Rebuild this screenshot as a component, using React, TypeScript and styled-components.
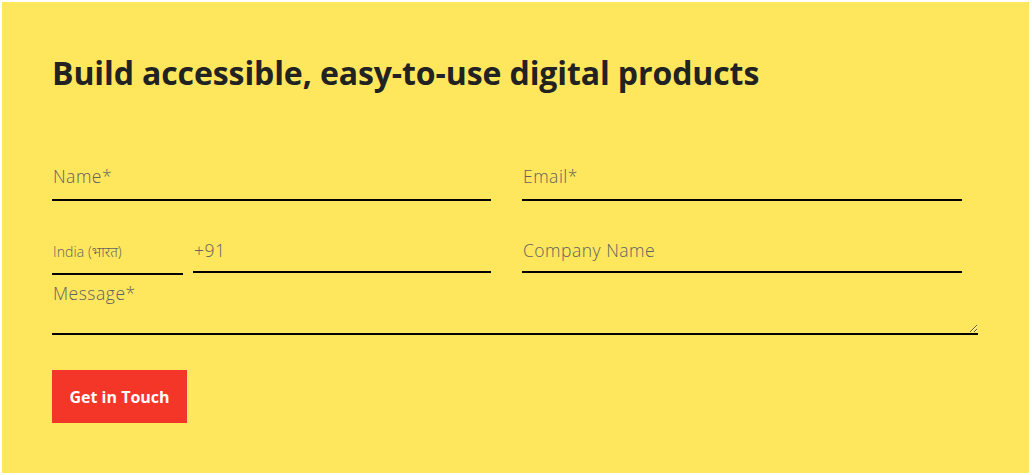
import React from "react";
import styled, { createGlobalStyle } from "styled-components";

const Global = createGlobalStyle`
  html, body { margin: 0; padding: 0; background: #ffffff; }
  body { padding: 2px 3px 2px 2px; font-family: "Open Sans", "Noto Sans", sans-serif; }
  * { box-sizing: border-box; }
`;

const Section = styled.section`
  width: 1027px;
  height: 471px;
  background: #fee75c;
  padding: 50px 50px 0 50px;
`;

const Heading = styled.h2`
  margin: 0;
  font-family: "Open Sans", sans-serif;
  font-weight: 700;
  font-size: 32px;
  line-height: 42px;
  letter-spacing: -0.1px;
  color: #222222;
`;

const Form = styled.form`
  margin-top: 61px;
  display: flex;
  flex-direction: column;
`;

const Row = styled.div<{ $gap?: number }>`
  display: grid;
  grid-template-columns: 439px 440px;
  column-gap: 31px;
  margin-top: ${(p) => p.$gap ?? 0}px;
`;

const Field = styled.input<{ $shift?: number }>`
  width: 100%;
  height: 46px;
  border: none;
  border-bottom: 2px solid #000;
  background: transparent;
  padding: ${(p) => (p.$shift ?? 0) > 0 ? `${p.$shift}px 0 0 1px` : "0 0 3px 1px"};
  font-family: "Open Sans", sans-serif;
  font-size: 17.5px;
  font-weight: 300;
  letter-spacing: 0.5px;
  color: #333;
  outline: none;
  &::placeholder { color: #626262; opacity: 1; }
`;

const Phone = styled.div`
  display: flex;
  gap: 10px;
  align-items: flex-start;
`;

const Country = styled.div`
  width: 131px;
  flex: none;
  height: 48px;
  border-bottom: 2px solid #000;
  display: flex;
  align-items: center;
  padding-left: 1px;
  padding-top: 2px;
  font-family: "Open Sans", "Noto Sans", sans-serif;
  font-size: 14px;
  font-weight: 300;
  color: #626262;
  letter-spacing: 0.1px;
`;

const Message = styled.textarea`
  width: 926px;
  height: 59px;
  margin-top: 1px;
  border: none;
  border-bottom: 2px solid #000;
  background: transparent;
  padding: 5px 0 0 1px;
  font-family: "Open Sans", sans-serif;
  font-size: 17.5px;
  font-weight: 300;
  letter-spacing: 0.5px;
  color: #333;
  outline: none;
  display: block;
  &::placeholder { color: #626262; opacity: 1; }
`;

const Button = styled.button`
  margin-top: 35px;
  width: 135px;
  height: 53px;
  border: none;
  background: #f33628;
  color: #fff;
  font-family: "Open Sans", sans-serif;
  font-weight: 700;
  font-size: 16px;
  letter-spacing: 0px;
  cursor: pointer;
  align-self: flex-start;
`;

export default function App() {
  return (
    <>
      <Global />
      <Section>
        <Heading>Build accessible, easy-to-use digital products</Heading>
        <Form onSubmit={(e) => e.preventDefault()}>
          <Row>
            <Field placeholder="Name*" />
            <Field placeholder="Email*" />
          </Row>
          <Row $gap={26}>
            <Phone>
              <Country>India (भारत)</Country>
              <Field $shift={1} placeholder="+91" />
            </Phone>
            <Field $shift={1} placeholder="Company Name" />
          </Row>
          <Message placeholder="Message*" />
          <Button type="submit">Get in Touch</Button>
        </Form>
      </Section>
    </>
  );
}
